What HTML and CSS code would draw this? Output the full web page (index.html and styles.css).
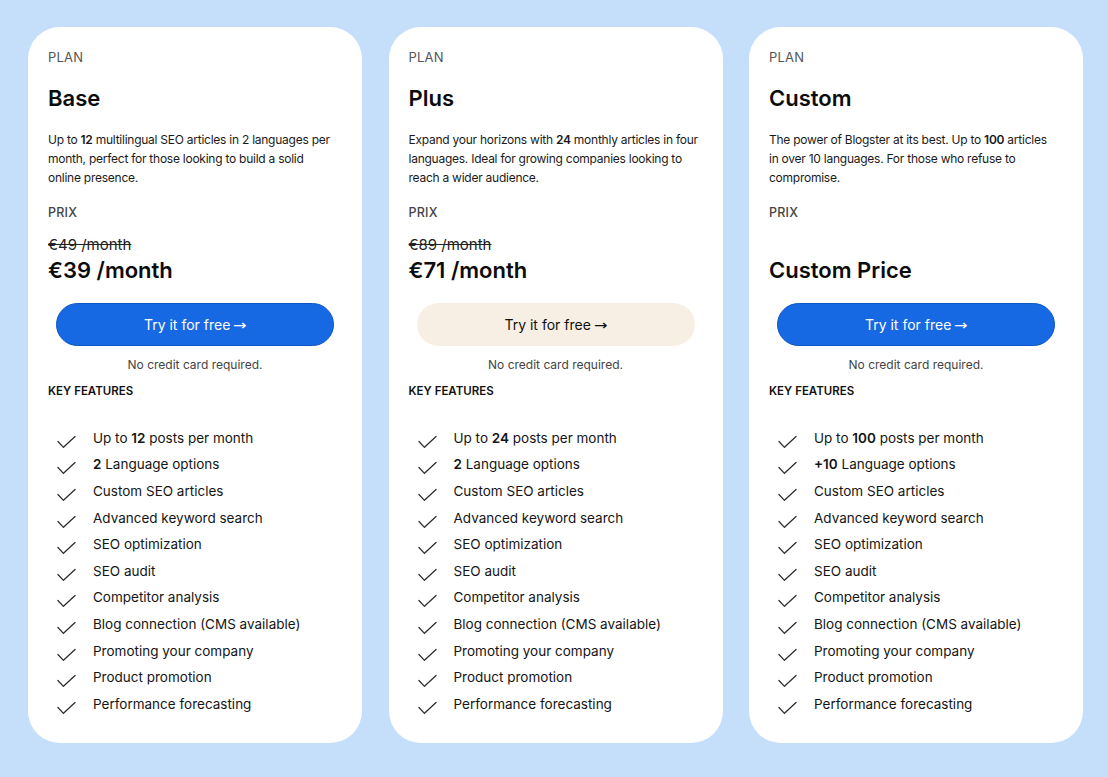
FILE: index.html
```html
<!DOCTYPE html>
<html lang="en">
<head>
<meta charset="utf-8">
<title>Pricing</title>
<link rel="stylesheet" href="styles.css">
</head>
<body>
<svg width="0" height="0" class="defs" aria-hidden="true">
  <symbol id="check" viewBox="0 0 20 14">
    <path d="M1 6.5 L6.8 12.6 L19 1.2" fill="none" stroke="#2a2a2a" stroke-width="1.3" stroke-linecap="round" stroke-linejoin="round"/>
  </symbol>
</svg>
<main class="plans">
  <section class="card">
    <div class="label">PLAN</div>
    <h2 class="name">Base</h2>
    <p class="desc">Up to <b>12</b> multilingual SEO articles in 2 languages per<br>month, perfect for those looking to build a solid<br>online presence.</p>
    <div class="label prix">PRIX</div>
    <div class="old">€49 /month</div>
    <div class="price">€39 /month</div>
    <a class="btn btn-blue" href="#">Try it for free <span class="arrow">→</span></a>
    <div class="note">No credit card required.</div>
    <div class="kf">KEY FEATURES</div>
    <ul class="features">
      <li><svg class="ic"><use href="#check"/></svg><span>Up to <b>12</b> posts per month</span></li>
      <li><svg class="ic"><use href="#check"/></svg><span><b>2</b> Language options</span></li>
      <li><svg class="ic"><use href="#check"/></svg><span>Custom SEO articles</span></li>
      <li><svg class="ic"><use href="#check"/></svg><span>Advanced keyword search</span></li>
      <li><svg class="ic"><use href="#check"/></svg><span>SEO optimization</span></li>
      <li><svg class="ic"><use href="#check"/></svg><span>SEO audit</span></li>
      <li><svg class="ic"><use href="#check"/></svg><span>Competitor analysis</span></li>
      <li><svg class="ic"><use href="#check"/></svg><span>Blog connection (CMS available)</span></li>
      <li><svg class="ic"><use href="#check"/></svg><span>Promoting your company</span></li>
      <li><svg class="ic"><use href="#check"/></svg><span>Product promotion</span></li>
      <li><svg class="ic"><use href="#check"/></svg><span>Performance forecasting</span></li>
    </ul>
  </section>
  <section class="card">
    <div class="label">PLAN</div>
    <h2 class="name">Plus</h2>
    <p class="desc">Expand your horizons with <b>24</b> monthly articles in four<br>languages. Ideal for growing companies looking to<br>reach a wider audience.</p>
    <div class="label prix">PRIX</div>
    <div class="old">€89 /month</div>
    <div class="price">€71 /month</div>
    <a class="btn btn-beige" href="#">Try it for free <span class="arrow">→</span></a>
    <div class="note">No credit card required.</div>
    <div class="kf">KEY FEATURES</div>
    <ul class="features">
      <li><svg class="ic"><use href="#check"/></svg><span>Up to <b>24</b> posts per month</span></li>
      <li><svg class="ic"><use href="#check"/></svg><span><b>2</b> Language options</span></li>
      <li><svg class="ic"><use href="#check"/></svg><span>Custom SEO articles</span></li>
      <li><svg class="ic"><use href="#check"/></svg><span>Advanced keyword search</span></li>
      <li><svg class="ic"><use href="#check"/></svg><span>SEO optimization</span></li>
      <li><svg class="ic"><use href="#check"/></svg><span>SEO audit</span></li>
      <li><svg class="ic"><use href="#check"/></svg><span>Competitor analysis</span></li>
      <li><svg class="ic"><use href="#check"/></svg><span>Blog connection (CMS available)</span></li>
      <li><svg class="ic"><use href="#check"/></svg><span>Promoting your company</span></li>
      <li><svg class="ic"><use href="#check"/></svg><span>Product promotion</span></li>
      <li><svg class="ic"><use href="#check"/></svg><span>Performance forecasting</span></li>
    </ul>
  </section>
  <section class="card">
    <div class="label">PLAN</div>
    <h2 class="name">Custom</h2>
    <p class="desc">The power of Blogster at its best. Up to <b>100</b> articles<br>in over 10 languages. For those who refuse to<br>compromise.</p>
    <div class="label prix">PRIX</div>
    <div class="old old-empty"></div>
    <div class="price">Custom Price</div>
    <a class="btn btn-blue" href="#">Try it for free <span class="arrow">→</span></a>
    <div class="note">No credit card required.</div>
    <div class="kf">KEY FEATURES</div>
    <ul class="features">
      <li><svg class="ic"><use href="#check"/></svg><span>Up to <b>100</b> posts per month</span></li>
      <li><svg class="ic"><use href="#check"/></svg><span><b>+10</b> Language options</span></li>
      <li><svg class="ic"><use href="#check"/></svg><span>Custom SEO articles</span></li>
      <li><svg class="ic"><use href="#check"/></svg><span>Advanced keyword search</span></li>
      <li><svg class="ic"><use href="#check"/></svg><span>SEO optimization</span></li>
      <li><svg class="ic"><use href="#check"/></svg><span>SEO audit</span></li>
      <li><svg class="ic"><use href="#check"/></svg><span>Competitor analysis</span></li>
      <li><svg class="ic"><use href="#check"/></svg><span>Blog connection (CMS available)</span></li>
      <li><svg class="ic"><use href="#check"/></svg><span>Promoting your company</span></li>
      <li><svg class="ic"><use href="#check"/></svg><span>Product promotion</span></li>
      <li><svg class="ic"><use href="#check"/></svg><span>Performance forecasting</span></li>
    </ul>
  </section>
</main>
</body>
</html>
```

FILE: styles.css
```css
* { box-sizing: border-box; }
html, body { margin: 0; padding: 0; }
body {
  background: #c5dffb;
  font-family: "Inter", "Liberation Sans", sans-serif;
  color: #111;
  width: 1108px;
  height: 777px;
  overflow: hidden;
}
.defs { position: absolute; }
.plans {
  display: flex;
  gap: 26.5px;
  padding: 27px 0 0 28px;
}
.card {
  width: 334px;
  height: 716px;
  background: #fff;
  border-radius: 32px;
  padding: 22px 20px 26px;
  display: flex;
  flex-direction: column;
}
.label {
  font-size: 13px;
  line-height: 16px;
  color: #555;
  letter-spacing: 0.2px;
}
.name {
  margin: 19px 0 0;
  font-size: 22px;
  line-height: 28px;
  font-weight: 600;
  color: #0c0c0c;
}
.desc {
  margin: 17.5px 0 0;
  font-size: 12px;
  line-height: 19px;
  letter-spacing: -0.25px;
  white-space: nowrap;
  color: #1a1a1a;
}
.desc b, .features b { font-weight: 600; }
.prix {
  margin-top: 18.5px;
  font-size: 12.5px;
  font-weight: 500;
  color: #444;
}
.old {
  margin-top: 15px;
  height: 18px;
  font-size: 15px;
  line-height: 18px;
  text-decoration: line-through;
  color: #222;
}
.price {
  margin-top: 2px;
  font-size: 22px;
  line-height: 28px;
  font-weight: 600;
  color: #0c0c0c;
}
.btn {
  margin: 19px 8px 0;
  height: 43px;
  border-radius: 22px;
  display: flex;
  align-items: center;
  justify-content: center;
  gap: 4px;
  font-size: 14px;
  text-decoration: none;
}
.arrow {
  font-family: "DejaVu Sans", sans-serif;
  font-size: 14px;
  transform: scaleX(1.15);
}
.btn-blue {
  background: #1668e3;
  color: #fff;
  border: 1px solid #0f56c4;
}
.btn-beige {
  background: #f7efe4;
  color: #111;
}
.note {
  margin-top: 11px;
  text-align: center;
  font-size: 12px;
  line-height: 16px;
  color: #444;
}
.kf {
  margin-top: 11px;
  font-size: 11.5px;
  line-height: 14px;
  font-weight: 600;
  color: #111;
}
.features {
  list-style: none;
  margin: 26.5px 0 0;
  padding: 0 0 0 9px;
}
.features li {
  display: flex;
  align-items: center;
  height: 26.6px;
  font-size: 13.5px;
  color: #151515;
}
.ic {
  width: 19px;
  height: 14px;
  margin-top: 8px;
  margin-right: 17px;
  flex: none;
}
```
